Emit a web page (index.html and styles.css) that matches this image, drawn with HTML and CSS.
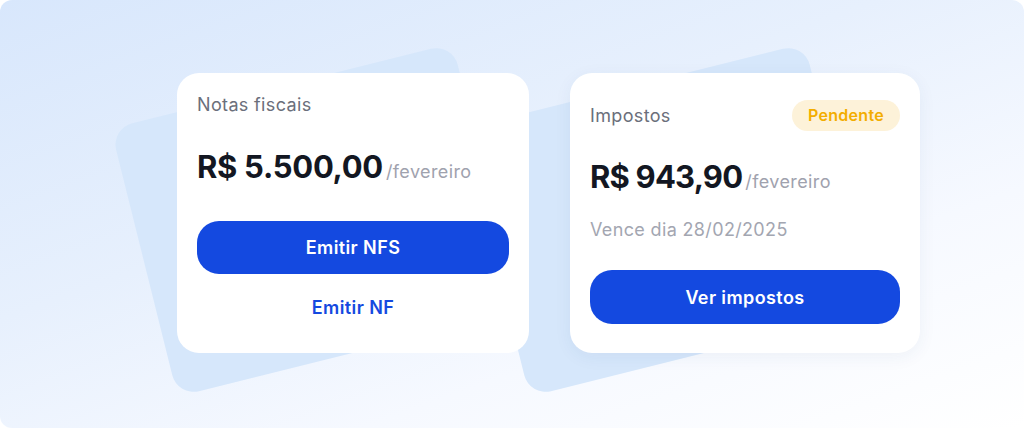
FILE: index.html
```html
<!DOCTYPE html>
<html lang="pt-BR">
<head>
<meta charset="utf-8">
<title>Resumo</title>
<link rel="stylesheet" href="styles.css">
</head>
<body>
<div class="stage">
  <div class="deco deco-1"></div>
  <div class="deco deco-2"></div>
  <div class="cards">
    <section class="card card-nf">
      <h2 class="card-title">Notas fiscais</h2>
      <div class="amount"><span class="value">R$ 5.500,00</span><span class="period">/fevereiro</span></div>
      <button class="btn-primary btn-nfs">Emitir NFS</button>
      <a class="link-action" href="#">Emitir NF</a>
    </section>
    <section class="card card-tax">
      <div class="card-head">
        <h2 class="card-title">Impostos</h2>
        <span class="badge">Pendente</span>
      </div>
      <div class="amount amount-tax"><span class="value">R$ 943,90</span><span class="period">/fevereiro</span></div>
      <p class="due">Vence dia 28/02/2025</p>
      <button class="btn-primary btn-tax">Ver impostos</button>
    </section>
  </div>
</div>
</body>
</html>
```
FILE: styles.css
```css
* { box-sizing: border-box; }
html, body { margin: 0; padding: 0; background: #ffffff; }
body {
  font-family: "Inter", "Liberation Sans", sans-serif;
  width: 1024px;
  height: 428px;
  overflow: hidden;
}
.stage {
  position: relative;
  width: 1024px;
  height: 428px;
  border-radius: 12px;
  overflow: hidden;
  background: linear-gradient(160deg, #d8e7fc 0%, #e7f0fd 40%, #f6f9ff 70%, #ffffff 100%);
}
.deco {
  position: absolute;
  width: 352px;
  height: 276px;
  border-radius: 22px;
  background: #d6e7fb;
  transform: rotate(-14deg);
}
.deco-1 { left: 139px; top: 82px; }
.deco-2 { left: 491px; top: 82px; }
.cards {
  position: relative;
  display: flex;
  gap: 41px;
  padding: 73px 0 0 177px;
}
.card {
  background: #ffffff;
  border-radius: 22px;
  height: 280px;
  display: flex;
  flex-direction: column;
}
.card > * { flex-shrink: 0; }
.card-nf {
  width: 352px;
  padding: 20px 20px;
}
.card-tax {
  width: 350px;
  padding: 27px 20px;
  box-shadow: 0 4px 18px rgba(30, 60, 120, 0.06);
}
.card-title {
  margin: 0;
  font-size: 18px;
  line-height: 24px;
  font-weight: 400;
  letter-spacing: 0.35px;
  color: #6b6f7b;
}
.card-head {
  display: flex;
  justify-content: space-between;
  align-items: center;
  height: 31px;
}
.badge {
  height: 31px;
  padding: 0 16px;
  border-radius: 16px;
  background: #fdf2d9;
  color: #f3ad00;
  font-size: 16px;
  font-weight: 600;
  letter-spacing: 0.3px;
  line-height: 31px;
}
.amount {
  display: flex;
  align-items: baseline;
  gap: 3px;
  margin-top: 30px;
  height: 40px;
  line-height: 40px;
}
.amount-tax { margin-top: 26px; }
.value {
  font-size: 31px;
  line-height: 40px;
  font-weight: 700;
  color: #131722;
  letter-spacing: -0.3px;
}
.amount-tax .value { letter-spacing: -0.8px; }
.period {
  font-size: 18px;
  line-height: 40px;
  letter-spacing: 0.4px;
  color: #9fa2ae;
}
.due {
  margin: 21px 0 0;
  font-size: 18px;
  line-height: 24px;
  letter-spacing: 0.35px;
  color: #a3a6b1;
}
.btn-primary {
  display: block;
  width: 100%;
  height: 54px;
  border: none;
  border-radius: 22px;
  background: #1449e0;
  color: #ffffff;
  font-family: inherit;
  font-size: 18px;
  font-weight: 600;
  letter-spacing: 0.4px;
}
.btn-nfs { margin-top: 34px; height: 53px; }
.btn-tax { margin-top: 28px; }
.link-action {
  display: block;
  margin-top: 22px;
  text-align: center;
  font-size: 18px;
  line-height: 24px;
  font-weight: 600;
  letter-spacing: 0.4px;
  color: #1449e0;
  text-decoration: none;
}
```
